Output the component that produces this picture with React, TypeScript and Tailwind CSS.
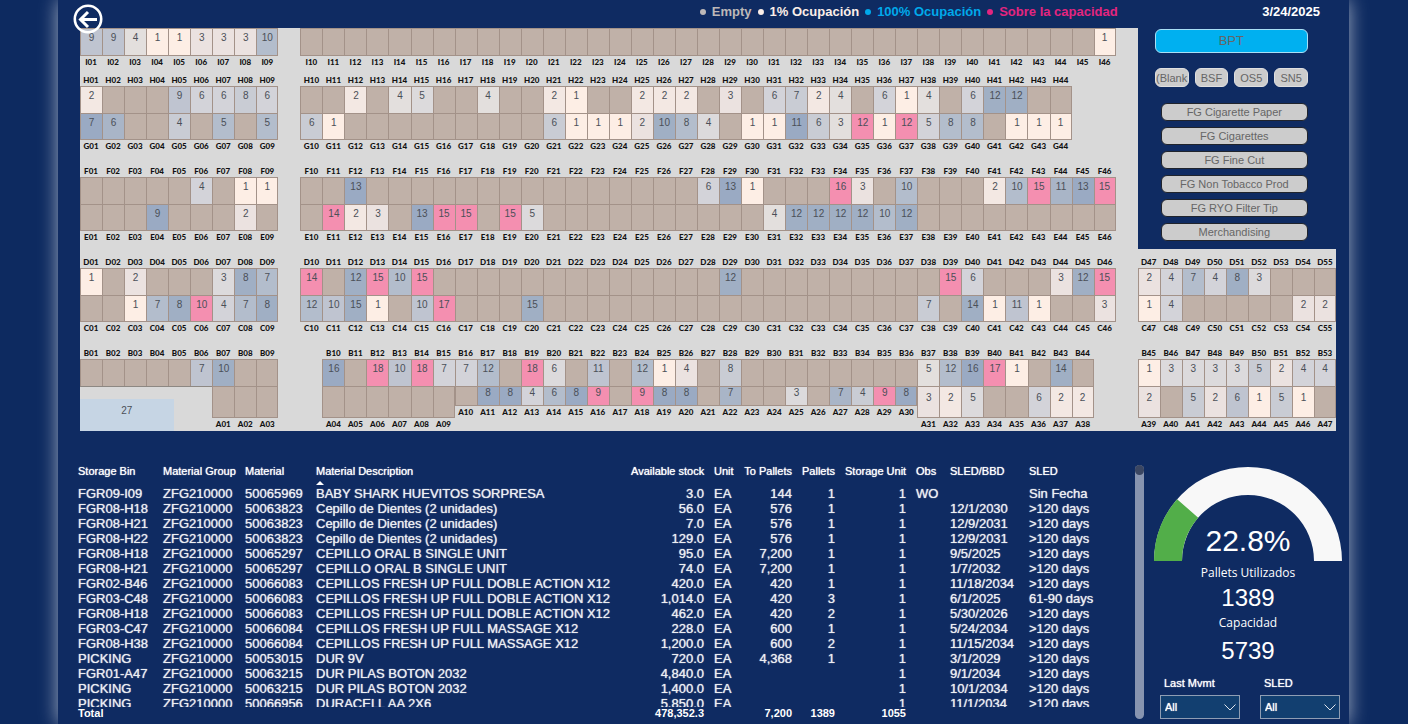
import React from "react";

type Segment = { from: number; to: number; col: number };
type Lane = { letter: string; segments: Segment[]; stock: string };

const shades: Record<string, string> = {
  a: "bg-[#fdeee5]",
  b: "bg-[#f3e8e3]",
  c: "bg-[#ebe2e0]",
  d: "bg-[#e3dfdd]",
  e: "bg-[#dcdadc]",
  f: "bg-[#d3d3d9]",
  g: "bg-[#c9ccd4]",
  h: "bg-[#bfc4d0]",
  i: "bg-[#b3bdcc]",
  j: "bg-[#a9b5c7]",
  k: "bg-[#a0afc4]",
  l: "bg-[#9aaac3]",
  p: "bg-[#f48fb0]",
};

const left: Segment = { from: 1, to: 9, col: 1 };
const middle: Segment = { from: 10, to: 46, col: 11 };
const shortMiddle: Segment = { from: 10, to: 44, col: 11 };
const right: Segment = { from: 47, to: 55, col: 49 };

const lanes: Record<string, Lane> = {
  I: {
    letter: "I",
    segments: [left, middle],
    stock: "1:9h 2:9h 3:4d 4:1a 5:1a 6:3c 7:3c 8:3c 9:10i 46:1a",
  },
  H: {
    letter: "H",
    segments: [left, shortMiddle],
    stock:
      "1:2b 5:9h 6:6f 7:6f 8:8g 9:6f 12:2b 14:4d 15:5e 18:4d 21:2b 22:1a 25:2b 26:2b 27:2b 29:3c 31:6f 32:7g 33:2b 34:4d 36:6f 37:1a 38:4d 40:6f 41:12k 42:12k",
  },
  G: {
    letter: "G",
    segments: [left, shortMiddle],
    stock:
      "1:7l 2:6j 5:4g 7:5i 9:5i 10:6g 11:1a 21:6g 22:1a 23:1a 24:1a 25:2c 26:10k 27:8i 28:4e 30:1a 31:1a 32:11l 33:6g 34:3d 35:12p 36:1a 37:12p 38:5f 39:8i 40:8i 42:1a 43:1a 44:1a",
  },
  F: {
    letter: "F",
    segments: [left, middle],
    stock:
      "6:4f 8:1a 9:1a 12:13l 28:6f 29:13l 30:1a 34:16p 35:3c 37:10i 41:2b 42:10i 43:15p 44:11j 45:13l 46:15p",
  },
  E: {
    letter: "E",
    segments: [left, middle],
    stock:
      "4:9l 8:2c 11:14p 12:2b 13:3c 15:13l 16:15p 17:15p 19:15p 20:5e 31:4d 32:12k 33:12k 34:12k 35:12k 36:10i 37:12k",
  },
  D: {
    letter: "D",
    segments: [left, middle, right],
    stock:
      "1:1a 3:2c 7:3e 8:8k 9:7i 10:14p 12:12k 13:15p 14:10i 15:15p 29:12k 39:15p 40:6f 44:3c 45:12k 46:15p 47:2c 48:4f 49:7i 50:4f 51:8k 52:3e",
  },
  C: {
    letter: "C",
    segments: [left, middle, right],
    stock:
      "3:1a 4:7i 5:8k 6:10p 7:4f 8:7i 9:8k 10:12i 11:10h 12:15k 13:1a 15:10h 16:17p 20:15k 38:7g 40:14k 41:1a 42:11h 43:1a 46:3c 47:1a 48:4f 54:2c 55:2c",
  },
  B: {
    letter: "B",
    segments: [left, { from: 10, to: 44, col: 12 }, { from: 45, to: 53, col: 49 }],
    stock:
      "6:7h 7:10k 10:16l 12:18p 13:10h 14:18p 15:7f 16:7f 17:12i 19:18p 20:6e 22:11h 24:12i 25:1a 26:4c 28:8g 37:5d 38:12i 39:16l 40:17p 41:1a 43:14k 45:1a 46:3e 47:3e 48:3e 49:3e 50:5g 51:2c 52:4f 53:4f",
  },
  A: {
    letter: "A",
    segments: [
      { from: 1, to: 3, col: 7 },
      { from: 4, to: 9, col: 12 },
      { from: 10, to: 30, col: 18 },
      { from: 31, to: 38, col: 39 },
      { from: 39, to: 47, col: 49 },
    ],
    stock:
      "11:8l 12:8l 13:4f 14:6i 15:8l 16:9p 18:9p 19:8l 20:8l 22:7j 25:3e 27:7j 28:4g 29:9p 30:8l 31:3c 32:2b 33:5e 36:6f 37:2b 38:2b 39:2c 41:5g 42:2c 43:6h 44:1a 45:5g 46:1a",
  },
};

function slots(lane: Lane) {
  const stock = new Map<number, { value: string; shade: string }>();
  lane.stock.split(" ").forEach((entry) => {
    const [position, rest] = entry.split(":");
    stock.set(Number(position), { value: rest.slice(0, -1), shade: shades[rest.slice(-1)] });
  });
  return lane.segments.flatMap((segment) =>
    Array.from({ length: segment.to - segment.from + 1 }, (_, i) => {
      const n = segment.from + i;
      return {
        n,
        column: segment.col + i,
        last: n === segment.to,
        name: lane.letter + String(n).padStart(2, "0"),
        value: stock.get(n)?.value ?? "",
        shade: stock.get(n)?.shade ?? "bg-[#c0b1a8]",
      };
    })
  );
}

const cellBase =
  "text-center text-[10px] leading-3 text-[#4b5058] border-t border-l border-[#a39289]";
const gridFor = (wide: boolean) =>
  wide ? "grid grid-cols-[repeat(57,minmax(0,1fr))]" : "grid grid-cols-[repeat(48,minmax(0,1fr))]";
const labelText = "h-3 text-center text-[8px] leading-3 font-black text-[#111] font-['Lato',sans-serif]";

function Cells({ id, wide = false, bottom = false }: { id: string; wide?: boolean; bottom?: boolean }) {
  return (
    <div className={gridFor(wide)}>
      {slots(lanes[id]).map((s) => (
        <div
          key={s.name}
          style={{ gridColumn: s.column }}
          className={`${cellBase} pt-[3px] ${id === "I" ? "h-7" : "h-[27px]"} ${s.shade} ${s.last ? "border-r" : ""} ${bottom ? "border-b" : ""}`}
        >
          {s.value}
        </div>
      ))}
    </div>
  );
}

function Labels({ id, wide = false }: { id: string; wide?: boolean }) {
  return (
    <div className={gridFor(wide)}>
      {slots(lanes[id]).map((s) => (
        <div key={s.name} style={{ gridColumn: s.column }} className={labelText}>
          {s.name}
        </div>
      ))}
    </div>
  );
}

function Aisle({ upper, lower, wide = false }: { upper: string; lower: string; wide?: boolean }) {
  return (
    <div>
      <Labels id={upper} wide={wide} />
      <Cells id={upper} wide={wide} />
      <Cells id={lower} wide={wide} bottom />
      <Labels id={lower} wide={wide} />
    </div>
  );
}

function FrontAisle() {
  return (
    <div>
      <Labels id="B" wide />
      <Cells id="B" wide />
      <div className="grid grid-cols-[repeat(57,minmax(0,1fr))]">
        <div className="col-[1/6] row-1 h-8 w-[85%] self-end bg-[#c6d5e4] pt-1.5 text-center text-[10px] leading-3 text-[#4b5058]">
          27
        </div>
        <div className="col-[1/7] row-1 border-t border-[#8d8883]" />
        {slots(lanes.A).map((s) => {
          const shallow = s.n >= 10 && s.n <= 30;
          return (
            <div key={s.name} style={{ gridColumn: s.column }} className="row-1 h-[45px]">
              <div
                className={`${cellBase} border-b ${shallow ? "h-5" : "h-8 pt-[5px]"} ${s.shade} ${s.last ? "border-r" : ""}`}
              >
                {s.value}
              </div>
              <div className={labelText}>{s.name}</div>
            </div>
          );
        })}
      </div>
    </div>
  );
}

const legend = [
  { text: "Empty", color: "text-[#bdb8b8]" },
  { text: "1% Ocupación", color: "text-[#fbeee8]" },
  { text: "100% Ocupación", color: "text-[#00a9ea]" },
  { text: "Sobre la capacidad", color: "text-[#e3257f]" },
];

const groups = [
  "FG Cigarette Paper",
  "FG Cigarettes",
  "FG Fine Cut",
  "FG Non Tobacco Prod",
  "FG RYO Filter Tip",
  "Merchandising",
];

const columns = [
  { title: "Storage Bin", width: "w-[85px]" },
  { title: "Material Group", width: "w-[82px]" },
  { title: "Material", width: "w-[71px]" },
  { title: "Material Description", width: "w-[315px]" },
  { title: "Available stock", width: "w-[83px]", numeric: true },
  { title: "Unit", width: "w-[30px]" },
  { title: "To Pallets", width: "w-[58px]", numeric: true },
  { title: "Pallets", width: "w-[43px]", numeric: true },
  { title: "Storage Unit", width: "w-[71px]", numeric: true },
  { title: "Obs", width: "w-[34px]" },
  { title: "SLED/BBD", width: "w-[79px]" },
  { title: "SLED", width: "" },
];

const rows = [
  ["FGR09-I09", "50065969", "BABY SHARK HUEVITOS SORPRESA", "3.0", "144", "1", "WO", "", "Sin Fecha"],
  ["FGR08-H18", "50063823", "Cepillo de Dientes (2 unidades)", "56.0", "576", "1", "", "12/1/2030", ">120 days"],
  ["FGR08-H21", "50063823", "Cepillo de Dientes (2 unidades)", "7.0", "576", "1", "", "12/9/2031", ">120 days"],
  ["FGR08-H22", "50063823", "Cepillo de Dientes (2 unidades)", "129.0", "576", "1", "", "12/9/2031", ">120 days"],
  ["FGR08-H18", "50065297", "CEPILLO ORAL B SINGLE UNIT", "95.0", "7,200", "1", "", "9/5/2025", ">120 days"],
  ["FGR08-H21", "50065297", "CEPILLO ORAL B SINGLE UNIT", "74.0", "7,200", "1", "", "1/7/2032", ">120 days"],
  ["FGR02-B46", "50066083", "CEPILLOS FRESH UP FULL DOBLE ACTION X12", "420.0", "420", "1", "", "11/18/2034", ">120 days"],
  ["FGR03-C48", "50066083", "CEPILLOS FRESH UP FULL DOBLE ACTION X12", "1,014.0", "420", "3", "", "6/1/2025", "61-90 days"],
  ["FGR08-H18", "50066083", "CEPILLOS FRESH UP FULL DOBLE ACTION X12", "462.0", "420", "2", "", "5/30/2026", ">120 days"],
  ["FGR03-C47", "50066084", "CEPILLOS FRESH UP FULL MASSAGE X12", "228.0", "600", "1", "", "5/24/2034", ">120 days"],
  ["FGR08-H38", "50066084", "CEPILLOS FRESH UP FULL MASSAGE X12", "1,200.0", "600", "2", "", "11/15/2034", ">120 days"],
  ["PICKING", "50053015", "DUR 9V", "720.0", "4,368", "1", "", "3/1/2029", ">120 days"],
  ["FGR01-A47", "50063215", "DUR PILAS BOTON 2032", "4,840.0", "", "", "", "9/1/2034", ">120 days"],
  ["PICKING", "50063215", "DUR PILAS BOTON 2032", "1,400.0", "", "", "", "10/1/2034", ">120 days"],
  ["PICKING", "50066956", "DURACELL AA 2X6", "5,850.0", "", "", "", "11/1/2034", ">120 days"],
].map(([bin, material, description, stock, perPallet, pallets, obs, date, sled]) => [
  bin,
  "ZFG210000",
  material,
  description,
  stock,
  "EA",
  perPallet,
  pallets,
  "1",
  obs,
  date,
  sled,
]);

const totals = ["Total", "", "", "", "478,352.3", "", "7,200", "1389", "1055", "", "", ""];

function StockTable() {
  return (
    <div className="h-full min-w-0 flex-1 overflow-hidden">
      <table className="w-full table-fixed border-separate border-spacing-0 whitespace-nowrap">
        <thead>
          <tr>
            {columns.map((c) => (
              <th
                key={c.title}
                className={`${c.width} h-[25px] pr-1.5 pl-1 align-top text-[11px] leading-5 font-normal text-white [text-shadow:0_0_1px_currentColor] ${c.numeric ? "text-right" : "text-left"}`}
              >
                {c.title}
                {c.title === "Material Description" && (
                  <svg viewBox="0 0 8 4" className="block h-1 w-2" aria-hidden="true">
                    <path d="M0 4L4 0L8 4Z" fill="#fff" />
                  </svg>
                )}
              </th>
            ))}
          </tr>
        </thead>
        <tbody>
          {rows.map((row, r) => (
            <tr key={r}>
              {row.map((value, c) => (
                <td
                  key={c}
                  className={`h-[15px] pr-1.5 pl-1 text-[13px] leading-[15px] text-[#eceef2] [text-shadow:0_0_1px_currentColor] ${columns[c].numeric ? "text-right" : ""}`}
                >
                  {value}
                </td>
              ))}
            </tr>
          ))}
        </tbody>
        <tfoot className="sticky bottom-0">
          <tr>
            {totals.map((value, c) => (
              <td
                key={c}
                className={`bg-[#0f2b62] pr-1.5 pl-1 text-[11px] leading-3 font-bold text-white ${columns[c].numeric ? "text-right" : ""}`}
              >
                {value}
              </td>
            ))}
          </tr>
        </tfoot>
      </table>
    </div>
  );
}

function Gauge() {
  const share = 0.228;
  const cx = 94;
  const cy = 95;
  const outer = 94;
  const inner = 66;
  const angle = Math.PI * (1 - share);
  const at = (radius: number) => `${cx + radius * Math.cos(angle)} ${cy - radius * Math.sin(angle)}`;
  return (
    <div className="relative">
      <svg viewBox="0 0 188 95" className="block w-full" role="img" aria-label="22.8%">
        <path d="M0 95A94 94 0 0 1 188 95H160A66 66 0 0 0 28 95Z" fill="#f8f8f8" />
        <path
          d={`M0 95A${outer} ${outer} 0 0 1 ${at(outer)}L${at(inner)}A${inner} ${inner} 0 0 0 28 95Z`}
          fill="#52ae49"
        />
      </svg>
      <div className="absolute inset-x-0 bottom-0 text-center text-[30px] leading-10">22.8%</div>
    </div>
  );
}

function Filter({ label, id }: { label: string; id: string }) {
  return (
    <div className="flex-1">
      <label htmlFor={id} className="block pl-1 text-[11px] leading-4 [text-shadow:0_0_1px_currentColor]">
        {label}
      </label>
      <div className="relative mt-1">
        <select
          id={id}
          className="block h-6 w-full appearance-none border border-[#8f9db3] bg-[#123f70] pl-1 text-[11px] text-white [text-shadow:0_0_1px_currentColor]"
        >
          <option>All</option>
        </select>
        <svg
          viewBox="0 0 12 7"
          className="pointer-events-none absolute top-[9px] right-1 h-[7px] w-3"
          fill="none"
          stroke="#dfe4ec"
          aria-hidden="true"
        >
          <path d="M0.5 0.5L6 6L11.5 0.5" />
        </svg>
      </div>
    </div>
  );
}

export default function App() {
  return (
    <div className="h-screen overflow-hidden bg-[#0d2a60] font-['Liberation_Sans',Arial,sans-serif] text-white">
      <main className="relative mr-[59px] ml-[58px] flex h-full flex-col bg-[#0f2b62] shadow-[0_0_18px_rgba(255,255,255,0.6)]">
        <button type="button" aria-label="Back" className="absolute top-1 left-[15px] size-[30px]">
          <svg viewBox="0 0 30 30" fill="none" stroke="#fff" strokeWidth="3" aria-hidden="true">
            <circle cx="15" cy="15" r="13.2" strokeWidth="2.6" />
            <path d="M24 15.5H8M15 8L7.5 15.5L15 23" />
          </svg>
        </button>

        <header className="grid h-7 grid-cols-[48fr_9fr] items-center pr-[13px] pb-1 pl-[22px] font-bold">
          <ul className="flex justify-end gap-1.5 pr-5 text-[13px]">
            {legend.map((item) => (
              <li key={item.text} className={`flex items-center gap-1.5 ${item.color}`}>
                <span className="size-1.5 rounded-full bg-current" />
                {item.text}
              </li>
            ))}
          </ul>
          <time className="pr-4 text-right text-[13px]">3/24/2025</time>
        </header>

        <section className="pr-[13px] pl-[22px]">
          <div className="grid grid-cols-[48fr_9fr]">
            <div className="flex flex-col bg-[#d9d9d9] pb-1.5">
              <Cells id="I" bottom />
              <Labels id="I" />
              <div className="mt-1.5 flex flex-col gap-[13px]">
                <Aisle upper="H" lower="G" />
                <Aisle upper="F" lower="E" />
              </div>
            </div>
            <aside className="flex flex-col pt-px pr-7 pl-[17px] text-[#666]">
              <button type="button" className="h-6 rounded-md border border-[#a9dff5] bg-[#00b0f0] text-[13px]">
                BPT
              </button>
              <div className="mt-[15px] grid grid-cols-4 gap-1.5">
                {["(Blank", "BSF", "OS5", "SN5"].map((plant) => (
                  <button
                    key={plant}
                    type="button"
                    className="h-[19px] rounded-md border border-[#e0e0e0] bg-[#cccccc] text-[11px] leading-4"
                  >
                    {plant}
                  </button>
                ))}
              </div>
              <div className="mt-4 flex flex-col gap-1.5 pl-1.5">
                {groups.map((group) => (
                  <button
                    key={group}
                    type="button"
                    className="h-[18px] rounded-md border border-[#20242c] bg-[#cccccc] text-[11px] leading-4"
                  >
                    {group}
                  </button>
                ))}
              </div>
            </aside>
          </div>
          <div className="flex flex-col gap-[13px] bg-[#d9d9d9] pt-[7px]">
            <Aisle upper="D" lower="C" wide />
            <FrontAisle />
          </div>
        </section>

        <section className="mt-[30px] flex min-h-0 flex-1 pr-[7px] pb-[5px] pl-4">
          <StockTable />
          <div className="mt-1 ml-[15px] w-[9px] rounded-full bg-[#8794b0]">
            <div className="h-2.5 rounded-full bg-[#3a4662]" />
          </div>
          <div className="mt-[5px] ml-2.5 w-[188px] shrink-0">
            <Gauge />
            <dl className="text-center">
              <dt className="pt-1 font-['Open_Sans',sans-serif] text-[12px] leading-4">Pallets Utilizados</dt>
              <dd className="pt-px text-[24px] leading-8">1389</dd>
              <dt className="pt-px font-['Open_Sans',sans-serif] text-[12px] leading-4">Capacidad</dt>
              <dd className="pt-1 text-[24px] leading-8">5739</dd>
            </dl>
            <div className="mt-2 flex gap-5 pr-0.5 pl-1.5">
              <Filter label="Last Mvmt" id="last-movement" />
              <Filter label="SLED" id="sled" />
            </div>
          </div>
        </section>
      </main>
    </div>
  );
}
